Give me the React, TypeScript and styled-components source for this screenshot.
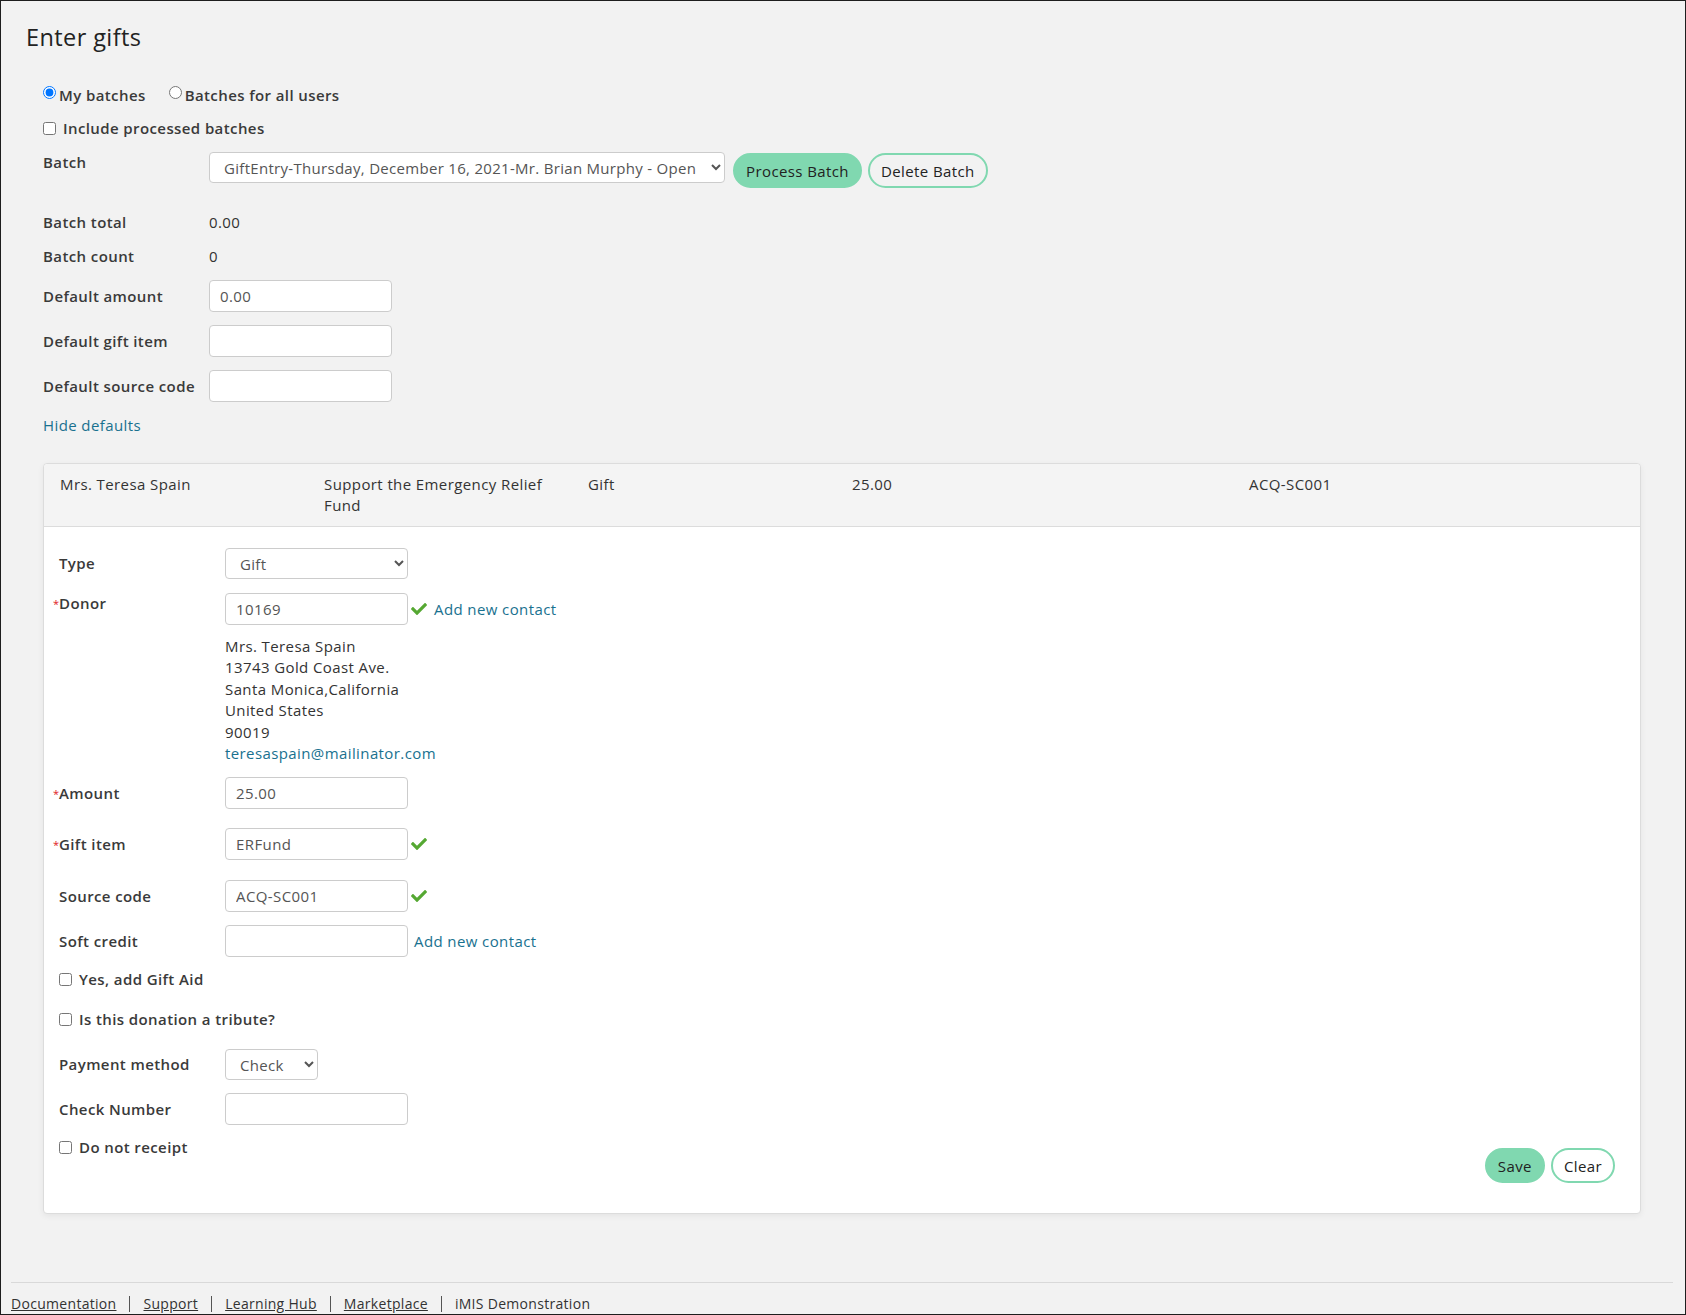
import styled, { createGlobalStyle } from "styled-components";
import { FaCheck } from "react-icons/fa";

const GlobalStyle = createGlobalStyle`
  html, body {
    margin: 0;
    padding: 0;
    background: #f2f2f2;
  }
  body {
    font-family: "Open Sans", "Noto Sans", sans-serif;
    letter-spacing: 0.4px;
    color: #333;
  }
  * {
    box-sizing: border-box;
  }
  input, select, button {
    letter-spacing: inherit;
  }
`;

const Frame = styled.div`
  width: 1686px;
  height: 1315px;
  border: 1px solid #1e1e1e;
  background: #f2f2f2;
  overflow: hidden;
  display: flex;
  flex-direction: column;
`;

const Main = styled.main`
  padding: 20px 44px 0 25px;
`;

const Title = styled.h1`
  margin: 0;
  font-size: 23.5px;
  font-weight: 400;
  line-height: 32px;
  color: #222;
`;

const Content = styled.div`
  padding-left: 17px;
`;

const Row = styled.div<{ $mt: number; $h?: number; $top?: boolean }>`
  display: flex;
  align-items: ${(p) => (p.$top ? "flex-start" : "center")};
  margin-top: ${(p) => p.$mt}px;
  min-height: ${(p) => p.$h ?? 24}px;
`;

const Label = styled.div<{ $required?: boolean }>`
  width: 166px;
  flex-shrink: 0;
  font-size: 15px;
  font-weight: 600;
  line-height: 21px;
  color: #3a3a3a;
  &::before {
    content: ${(p) => (p.$required ? '"*"' : '""')};
    display: inline-block;
    width: 6px;
    margin-left: -6px;
    color: #e0201b;
    font-size: 11px;
    font-weight: 400;
    vertical-align: top;
  }
`;

const Value = styled.div`
  font-size: 15px;
  line-height: 21px;
  color: #333;
`;

const Choice = styled.label<{ $gap?: number }>`
  display: inline-flex;
  align-items: center;
  font-size: 15px;
  font-weight: 600;
  color: #3a3a3a;
  margin-right: ${(p) => p.$gap ?? 0}px;
  input {
    margin: 0 ${(p) => (p.$gap !== undefined ? 3 : 7)}px 0 0;
  }
`;

const RadioBox = styled.input`
  position: relative;
  top: -3px;
  width: 13px;
  height: 13px;
`;

const CheckBox = styled.input`
  width: 13px;
  height: 13px;
`;

const TextInput = styled.input<{ $w?: number }>`
  width: ${(p) => p.$w ?? 183}px;
  height: 32px;
  border: 1px solid #ccc;
  border-radius: 4px;
  background: #fff;
  padding: 0 10px;
  font-family: inherit;
  font-size: 15px;
  color: #555;
`;

const Select = styled.select<{ $w: number }>`
  width: ${(p) => p.$w}px;
  height: 31px;
  border: 1px solid #ccc;
  border-radius: 4px;
  background: #fff;
  padding: 0 6px 0 10px;
  font-family: inherit;
  font-size: 15px;
  letter-spacing: 0.3px;
  color: #555;
`;

const Button = styled.button<{ $outline?: boolean }>`
  height: 35px;
  padding: 0 11px;
  border-radius: 18px;
  border: 2px solid #80d8b0;
  background: ${(p) => (p.$outline ? "transparent" : "#80d8b0")};
  font-family: inherit;
  font-size: 15px;
  color: #222;
  cursor: pointer;
`;

const ButtonGroup = styled.div<{ $ml?: number; $mt?: number }>`
  display: flex;
  gap: 6px;
  margin-left: ${(p) => p.$ml ?? 0}px;
  margin-top: ${(p) => p.$mt ?? 0}px;
`;

const Link = styled.a<{ $ml?: number }>`
  color: #19718f;
  font-size: 15px;
  line-height: 21px;
  text-decoration: none;
  margin-left: ${(p) => p.$ml ?? 0}px;
  cursor: pointer;
`;

const Tick = styled(FaCheck)`
  color: #55a832;
  width: 16px;
  height: 16px;
  margin-left: 3px;
  flex-shrink: 0;
`;

const Card = styled.section`
  margin-top: 26px;
  background: #fff;
  border: 1px solid #dcdcdc;
  border-radius: 4px;
  box-shadow: 0 2px 6px rgba(0, 0, 0, 0.06);
`;

const CardHeader = styled.div`
  display: grid;
  grid-template-columns: 234px 234px 234px 367px 1fr;
  column-gap: 30px;
  padding: 10px 16px;
  background: #f4f4f4;
  border-bottom: 1px solid #dcdcdc;
  border-radius: 4px 4px 0 0;
  font-size: 15px;
  line-height: 21px;
  color: #333;
  min-height: 63px;
`;

const CardBody = styled.div`
  padding: 0 25px 30px 15px;
`;

const FieldStack = styled.div`
  display: flex;
  flex-direction: column;
`;

const InlineGroup = styled.div`
  display: flex;
  align-items: center;
`;

const Address = styled.div`
  margin-top: 11px;
  font-size: 15px;
  line-height: 21.4px;
  color: #333;
`;

const ActionsRow = styled.div`
  display: flex;
  justify-content: space-between;
  align-items: flex-start;
  margin-top: 12px;
`;

const Footer = styled.footer`
  margin: auto 12px 0 10px;
  border-top: 1px solid #d9d9d9;
  padding-top: 11px;
  display: flex;
  align-items: center;
  font-size: 14px;
  line-height: 20px;
  letter-spacing: 0.3px;
  color: #333;
`;

const FooterLink = styled.a`
  color: #333;
  text-decoration: underline;
`;

const Divider = styled.span`
  width: 1px;
  height: 16px;
  background: #555;
  margin: 0 13px;
`;

const headerCells = [
  "Mrs. Teresa Spain",
  "Support the Emergency Relief Fund",
  "Gift",
  "25.00",
  "ACQ-SC001",
];

const addressLines = [
  "Mrs. Teresa Spain",
  "13743 Gold Coast Ave.",
  "Santa Monica,California",
  "United States",
  "90019",
];

const footerLinks = ["Documentation", "Support", "Learning Hub", "Marketplace"];

function App() {
  return (
    <>
      <GlobalStyle />
      <Frame>
        <Main>
          <Title>Enter gifts</Title>
          <Content>
            <Row $mt={30}>
              <Choice $gap={23}>
                <RadioBox type="radio" name="scope" defaultChecked />
                My batches
              </Choice>
              <Choice $gap={0}>
                <RadioBox type="radio" name="scope" />
                Batches for all users
              </Choice>
            </Row>
            <Row $mt={9}>
              <Choice>
                <CheckBox type="checkbox" />
                Include processed batches
              </Choice>
            </Row>
            <Row $mt={12} $h={36} $top>
              <Label>Batch</Label>
              <Select $w={516} defaultValue="b1">
                <option value="b1">
                  GiftEntry-Thursday, December 16, 2021-Mr. Brian Murphy - Open
                </option>
              </Select>
              <ButtonGroup $ml={8} $mt={1}>
                <Button>Process Batch</Button>
                <Button $outline>Delete Batch</Button>
              </ButtonGroup>
            </Row>
            <Row $mt={22}>
              <Label>Batch total</Label>
              <Value>0.00</Value>
            </Row>
            <Row $mt={10}>
              <Label>Batch count</Label>
              <Value>0</Value>
            </Row>
            <Row $mt={12} $h={32}>
              <Label>Default amount</Label>
              <TextInput defaultValue="0.00" />
            </Row>
            <Row $mt={13} $h={32}>
              <Label>Default gift item</Label>
              <TextInput />
            </Row>
            <Row $mt={13} $h={32}>
              <Label>Default source code</Label>
              <TextInput />
            </Row>
            <Row $mt={11}>
              <Link>Hide defaults</Link>
            </Row>

            <Card>
              <CardHeader>
                {headerCells.map((cell) => (
                  <div key={cell}>{cell}</div>
                ))}
              </CardHeader>
              <CardBody>
                <Row $mt={21} $h={31}>
                  <Label>Type</Label>
                  <Select $w={183} defaultValue="gift">
                    <option value="gift">Gift</option>
                  </Select>
                </Row>
                <Row $mt={14} $top>
                  <Label $required>Donor</Label>
                  <FieldStack>
                    <InlineGroup>
                      <TextInput defaultValue="10169" />
                      <Tick />
                      <Link $ml={7}>Add new contact</Link>
                    </InlineGroup>
                    <Address>
                      {addressLines.map((line) => (
                        <div key={line}>{line}</div>
                      ))}
                      <Link>teresaspain@mailinator.com</Link>
                    </Address>
                  </FieldStack>
                </Row>
                <Row $mt={13} $h={32}>
                  <Label $required>Amount</Label>
                  <TextInput defaultValue="25.00" />
                </Row>
                <Row $mt={19} $h={32}>
                  <Label $required>Gift item</Label>
                  <TextInput defaultValue="ERFund" />
                  <Tick />
                </Row>
                <Row $mt={20} $h={32}>
                  <Label>Source code</Label>
                  <TextInput defaultValue="ACQ-SC001" />
                  <Tick />
                </Row>
                <Row $mt={13} $h={32}>
                  <Label>Soft credit</Label>
                  <TextInput />
                  <Link $ml={6}>Add new contact</Link>
                </Row>
                <Row $mt={12} $h={20}>
                  <Choice>
                    <CheckBox type="checkbox" />
                    Yes, add Gift Aid
                  </Choice>
                </Row>
                <Row $mt={20} $h={20}>
                  <Choice>
                    <CheckBox type="checkbox" />
                    Is this donation a tribute?
                  </Choice>
                </Row>
                <Row $mt={20} $h={31}>
                  <Label>Payment method</Label>
                  <Select $w={93} defaultValue="check">
                    <option value="check">Check</option>
                  </Select>
                </Row>
                <Row $mt={13} $h={32}>
                  <Label>Check Number</Label>
                  <TextInput />
                </Row>
                <ActionsRow>
                  <Choice>
                    <CheckBox type="checkbox" />
                    Do not receipt
                  </Choice>
                  <ButtonGroup $mt={11}>
                    <Button>Save</Button>
                    <Button $outline>Clear</Button>
                  </ButtonGroup>
                </ActionsRow>
              </CardBody>
            </Card>
          </Content>
        </Main>
        <Footer>
          {footerLinks.map((name) => (
            <span key={name} style={{ display: "contents" }}>
              <FooterLink>{name}</FooterLink>
              <Divider />
            </span>
          ))}
          <span>iMIS Demonstration</span>
        </Footer>
      </Frame>
    </>
  );
}

export default App;
